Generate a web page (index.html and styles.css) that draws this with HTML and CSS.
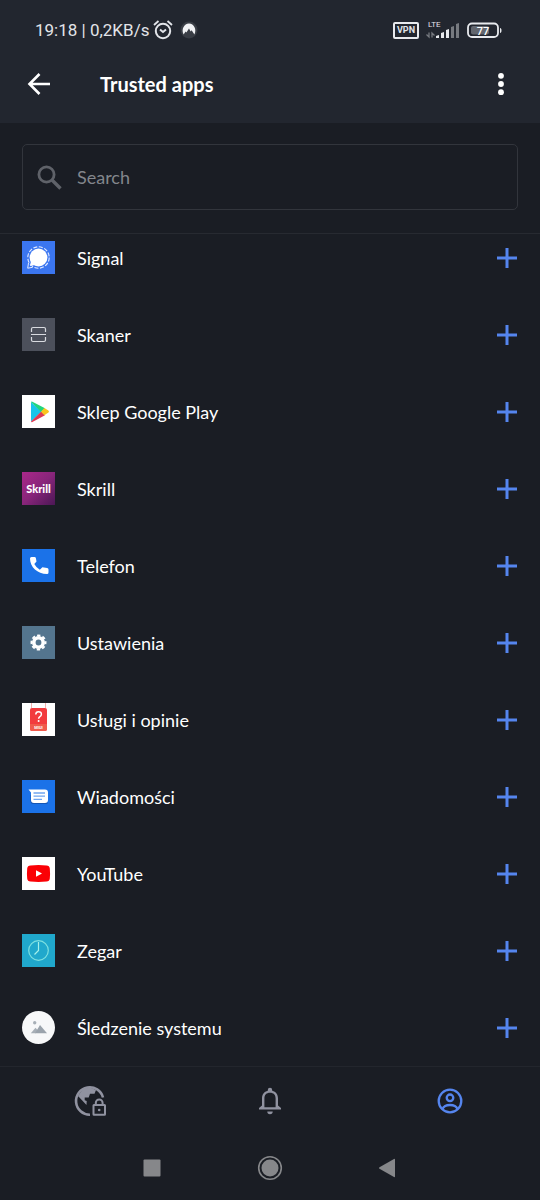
FILE: index.html
```html
<!DOCTYPE html>
<html lang="pl">
<head>
<meta charset="utf-8">
<meta name="viewport" content="width=device-width, initial-scale=1">
<title>Trusted apps</title>
<link rel="stylesheet" href="styles.css">
</head>
<body>
<div class="screen">
  <header class="header">
    <div class="status">
      <div class="status-group">
        <span>19:18 | 0,2KB/s</span>
        <svg class="status-alarm" width="20" height="20" viewBox="0 0 20 20" fill="none" stroke="#e2e4e9" stroke-width="2"><circle cx="10" cy="11" r="7.2"/><path d="M1 5l4.500-4M19 5l-4.500-4" stroke-width="1.800"/><path d="M7 9.500l3 2.500 3-2.500"/></svg>
        <svg width="18" height="18" viewBox="0 0 18 18"><circle cx="9" cy="9" r="8.500" fill="#393d45"/><path d="M3.600 13.500C1 8.500 4 2.500 9 2.500s8 6 5.400 11l-2.800-4.300-1 1.300L9 7.600l-2.600 4-.8-1z" fill="#f1f2f5"/></svg>
      </div>
      <div class="status-group status-right">
        <span class="vpn">VPN</span>
        <svg class="signal" width="34" height="20" viewBox="0 0 34 20"><text x="2" y="7" class="lte">LTE</text><g fill="#e8eaee"><path d="M10 16l3-1v3h-3zM15 13l3-1v6h-3zM20 10l3-1v9h-3z"/></g><path d="M25 7l3-1v12h-3zM30 4l3-1v15h-3z" fill="#777a80"/><path d="M3 12.500V17l-2.500-2.500M6 17.500V13l2.500 2.500" fill="none" stroke="#777a80" stroke-width="1.300"/></svg>
        <svg width="36" height="17" viewBox="0 0 36 17"><rect x="1" y="1.500" width="30" height="13.500" rx="4" fill="none" stroke="#e8eaee" stroke-width="1.800"/><rect x="4" y="4" width="18" height="8.500" rx="2" fill="#62666e"/><path d="M33 6c2 0 2 5 0 5z" fill="#e8eaee"/><text x="16" y="12.500" class="battery">77</text></svg>
      </div>
    </div>
    <div class="toolbar">
      <button class="icon-button" aria-label="Back"><svg width="24" height="24" viewBox="0 0 24 24" fill="none" stroke="#fff" stroke-width="2.600"><path d="M23 12H3M12.500 2L2.500 12l10 10"/></svg></button>
      <h1>Trusted apps</h1>
      <button class="icon-button" aria-label="More options"><svg width="24" height="24" viewBox="0 0 24 24" fill="#fff"><circle cx="12" cy="3.800" r="2.900"/><circle cx="12" cy="12" r="2.900"/><circle cx="12" cy="20.200" r="2.900"/></svg></button>
    </div>
  </header>

  <div class="search">
    <label class="search-box">
      <svg width="25" height="25" viewBox="0 0 25 25" fill="none" stroke="#5f6269" stroke-width="2.800"><circle cx="9.500" cy="9.500" r="7.600"/><path d="M15 15l8.500 8.500" stroke-width="3.400"/></svg>
      <input type="search" placeholder="Search" aria-label="Search">
    </label>
  </div>

  <main class="content">
    <ul class="apps">
      <li><svg class="app-icon" viewBox="0 0 33 33"><path fill="#3b76f0" d="M0 0h33v33H0z"/><circle cx="16.500" cy="16.500" r="8.900" fill="#fff"/><path d="M9 20l-1 5 5-1z" fill="#fff"/><circle cx="16.500" cy="16.500" r="10.700" fill="none" stroke="#e3ebff" stroke-width="1.100" stroke-dasharray="4 1.600"/><path d="M6.500 22l-.8 5.200 5-.9" fill="none" stroke="#e3ebff"/></svg><span>Signal</span><button class="add" aria-label="Add Signal"><svg viewBox="0 0 22 22"><path d="M11 1v20M1 11h20"/></svg></button></li>
      <li><svg class="app-icon" viewBox="0 0 33 33"><path fill="#4c505b" d="M0 0h33v33H0z"/><path d="M9.500 14v-3q0-1.500 1.500-1.500h11q1.500 0 1.500 1.500v3M9.500 19v3q0 1.500 1.500 1.500h11q1.500 0 1.500-1.500v-3M9 16.500h15" fill="none" stroke="#d9dbe0" stroke-width="1.200"/></svg><span>Skaner</span><button class="add" aria-label="Add Skaner"><svg viewBox="0 0 22 22"><path d="M11 1v20M1 11h20"/></svg></button></li>
      <li><svg class="app-icon" viewBox="0 0 33 33"><path fill="#fff" d="M0 0h33v33H0z"/><path d="M9 7v19.500l10.500-10z" fill="#18c4ea"/><path d="M9 7q.4-.7 1.400-.2L23 13.300l-3.800 3.600z" fill="#22d67d"/><path d="M9 26.500q.4 1 1.400.4L23 20.200l-3.800-3.600z" fill="#dc3a54"/><path d="M22.400 13l4 2.500q1.200 1 0 2l-4 2.700-3.400-3.500z" fill="#f9c51c"/></svg><span>Sklep Google Play</span><button class="add" aria-label="Add Sklep Google Play"><svg viewBox="0 0 22 22"><path d="M11 1v20M1 11h20"/></svg></button></li>
      <li><svg class="app-icon" viewBox="0 0 33 33"><defs><linearGradient id="skrill" x1="0" y1="0" x2="1" y2="1"><stop offset="0" stop-color="#aa2889"/><stop offset=".5" stop-color="#88257a"/><stop offset="1" stop-color="#4b1755"/></linearGradient></defs><path fill="url(#skrill)" d="M0 0h33v33H0z"/><text x="16.500" y="20.500" class="skrill">Skrill</text></svg><span>Skrill</span><button class="add" aria-label="Add Skrill"><svg viewBox="0 0 22 22"><path d="M11 1v20M1 11h20"/></svg></button></li>
      <li><svg class="app-icon" viewBox="0 0 33 33"><path fill="#1b72e8" d="M0 0h33v33H0z"/><path d="M8 9.500Q8 8 9.500 8h3q1.200 0 1.400 1.200l.6 3.300-2.200 2.600q2.100 4 5.500 5.600l2.600-2.500 4.700.8q1.400.3 1.400 1.500v3q0 1.500-1.500 1.500C15.500 25 8 18 8 9.500z" fill="#fff"/></svg><span>Telefon</span><button class="add" aria-label="Add Telefon"><svg viewBox="0 0 22 22"><path d="M11 1v20M1 11h20"/></svg></button></li>
      <li><svg class="app-icon" viewBox="0 0 33 33"><path fill="#54758e" d="M0 0h33v33H0z"/><circle cx="16.500" cy="16.500" r="4.700" fill="none" stroke="#fff" stroke-width="3.600"/><circle cx="16.500" cy="16.500" r="7" fill="none" stroke="#fff" stroke-width="2" stroke-dasharray="3.300 2.200" stroke-dashoffset="1.650"/></svg><span>Ustawienia</span><button class="add" aria-label="Add Ustawienia"><svg viewBox="0 0 22 22"><path d="M11 1v20M1 11h20"/></svg></button></li>
      <li><svg class="app-icon" viewBox="0 0 33 33"><path fill="#fff" d="M0 0h33v33H0z"/><path d="M9.500 0v5M23.500 0v5" stroke="#f2b3b0"/><rect x="8" y="5" width="17" height="23" rx="2" fill="#f23b3e"/><path d="M8 21h17v5q0 2-2 2H10q-2 0-2-2z" fill="#f05a4c"/><path d="M13.800 11.500q0-2.700 2.800-2.700t2.800 2.500q0 1.500-1.500 2.300-1.300.8-1.300 2.200" fill="none" stroke="#fff" stroke-width="1.500"/><circle cx="16.600" cy="18" r="1" fill="#fff"/><text x="16.500" y="26" class="miui">MIUI</text></svg><span>Usługi i opinie</span><button class="add" aria-label="Add Usługi i opinie"><svg viewBox="0 0 22 22"><path d="M11 1v20M1 11h20"/></svg></button></li>
      <li><svg class="app-icon" viewBox="0 0 33 33"><path fill="#1b72e8" d="M0 0h33v33H0z"/><path d="M8.500 15h17v9H11q-2.500 0-2.500-3z" fill="#1556b5"/><path d="M6.500 9.500H23q3 0 3 3V20q0 3-3 3H12q-3 0-3-3v-7.500z" fill="#fff"/><path d="M11.500 13h11.500M11.500 16.200h11.500M11.500 19.400h8.500" stroke="#70a5ef" stroke-width="1.300"/></svg><span>Wiadomości</span><button class="add" aria-label="Add Wiadomości"><svg viewBox="0 0 22 22"><path d="M11 1v20M1 11h20"/></svg></button></li>
      <li><svg class="app-icon" viewBox="0 0 33 33"><path fill="#fff" d="M0 0h33v33H0z"/><path d="M8.500 8.500q8-.8 16 0 3 .2 3.300 3 .5 5 0 10-.3 2.800-3.300 3-8 .8-16 0-3-.2-3.300-3-.5-5 0-10 .3-2.800 3.300-3z" fill="#fa0005"/><path d="M14 13.200v6.600l6-3.300z" fill="#fff"/></svg><span>YouTube</span><button class="add" aria-label="Add YouTube"><svg viewBox="0 0 22 22"><path d="M11 1v20M1 11h20"/></svg></button></li>
      <li><svg class="app-icon" viewBox="0 0 33 33"><path fill="#20a8cc" d="M0 0h33v33H0z"/><circle cx="16.500" cy="16.500" r="9.800" fill="none" stroke="#7de0e0" stroke-width="1.200"/><path d="M16.500 8v8.500L12.500 20.500" fill="none" stroke="#a5f0ea" stroke-width="1.200"/></svg><span>Zegar</span><button class="add" aria-label="Add Zegar"><svg viewBox="0 0 22 22"><path d="M11 1v20M1 11h20"/></svg></button></li>
      <li><svg class="app-icon" viewBox="0 0 33 33"><circle cx="16.500" cy="16.500" r="16.500" fill="#f7f8f9"/><path d="M8.800 22.200l4.700-5.400 2.300 2.500-2.200 2.900z" fill="#a7afb7"/><path d="M13 22.200L18 14l7 8.200z" fill="#9aa3ac"/><circle cx="12.700" cy="11.700" r="1.700" fill="#a7afb7"/></svg><span>Śledzenie systemu</span><button class="add" aria-label="Add Śledzenie systemu"><svg viewBox="0 0 22 22"><path d="M11 1v20M1 11h20"/></svg></button></li>
    </ul>
  </main>

  <nav class="tabs" aria-label="Main">
    <button aria-label="VPN"><svg width="32" height="32" viewBox="0 0 32 32" fill="none" stroke="#9092a0" stroke-width="2.600"><path d="M16 29.700A13.700 13.700 0 1 1 29 12.500"/><path d="M4 11l8.500 9 .2-4-2-.7V12.500h4L16 8.700h4.500L22 5 16 2.500 9 4z" fill="#9092a0" stroke="none"/><rect x="19.500" y="20" width="11.500" height="9.800" rx=".5" stroke-width="2"/><path d="M21.800 20v-2.200a3.400 3.400 0 0 1 6.800 0V20" stroke-width="2"/><circle cx="25.200" cy="25" r="1.300" fill="#9092a0" stroke="none"/></svg></button>
    <button aria-label="Notifications"><svg width="24" height="28" viewBox="0 0 24 28" fill="#9092a0"><path d="M1 22.500V21l3-2.500v-7c0-4 2-6.800 5.800-7.800V3a2.200 2.200 0 0 1 4.400 0v.7C18 4.700 20 7.500 20 11.500v7l3 2.500v1.500zM6.400 20.200h11.200v-8.700c0-3.600-2-5.700-5.600-5.700s-5.600 2.100-5.600 5.700z" fill-rule="evenodd"/><path d="M9.300 24.500h5.400a2.700 2.700 0 0 1-5.400 0z"/></svg></button>
    <button aria-label="Profile" aria-current="page"><svg width="26" height="26" viewBox="0 0 26 26" fill="none" stroke="#5585ee" stroke-width="2.300"><circle cx="13" cy="13" r="11.300"/><circle cx="13" cy="9.800" r="3.300"/><path d="M5.500 21c1-2.500 4-4 7.500-4s6.500 1.500 7.500 4"/></svg></button>
  </nav>

  <div class="system-nav">
    <button aria-label="Recent apps"><svg width="26" height="26" viewBox="0 0 26 26"><rect x="4.500" y="4.500" width="17" height="17" rx="1" fill="#86878a"/></svg></button>
    <button aria-label="Home"><svg width="26" height="26" viewBox="0 0 26 26"><circle cx="13" cy="13" r="11.300" fill="none" stroke="#86878a" stroke-width="1.600"/><circle cx="13" cy="13" r="8.500" fill="#86878a"/></svg></button>
    <button aria-label="System back"><svg width="26" height="26" viewBox="0 0 26 26"><path d="M4.500 12.200L19 4q1-.5 1 .6v16.800q0 1.100-1 .6L4.500 13.800q-1.200-.8 0-1.600z" fill="#86878a"/></svg></button>
  </div>
</div>
</body>
</html>
```
FILE: styles.css
```css
* { box-sizing: border-box; }

body {
  margin: 0;
  background: #1a1d24;
  color: #fff;
  font-family: Lato, "Liberation Sans", sans-serif;
}

button {
  display: grid;
  place-items: center;
  padding: 0;
  border: 0;
  background: none;
  cursor: pointer;
}

.screen {
  display: flex;
  flex-direction: column;
  min-height: 100vh;
}

.header {
  padding-bottom: 15px;
  background: #22262f;
}

.status {
  display: flex;
  justify-content: space-between;
  align-items: center;
  height: 60px;
  padding: 0 37px 0 35px;
  color: #e2e4e9;
  font: 400 17px Roboto, sans-serif;
}

.status-group {
  display: flex;
  align-items: center;
  gap: 7px;
}

.status-alarm { margin-left: -3px; }

.vpn {
  padding: 0 2px;
  border: 2px solid #e8eaee;
  border-radius: 2px;
  font: 700 9px/13px Roboto, sans-serif;
}

.lte {
  fill: #e2e4e9;
  font: 400 8px Roboto, sans-serif;
}

.battery {
  fill: #fff;
  font: 500 11px Roboto, sans-serif;
  text-anchor: middle;
}

.toolbar {
  display: flex;
  align-items: center;
  height: 48px;
  padding: 0 15px;
}

.icon-button {
  width: 48px;
  height: 48px;
}

.toolbar h1 {
  flex: 1;
  margin: 0;
  padding-left: 37px;
  font-size: 20px;
  font-weight: 700;
}

.search {
  padding: 21px 22px 23px;
  border-bottom: 1px solid #272a31;
}

.search-box {
  display: flex;
  align-items: center;
  gap: 15px;
  height: 66px;
  padding: 0 14px;
  border: 1px solid #32353c;
  border-radius: 5px;
}

.search-box input {
  flex: 1;
  min-width: 0;
  padding: 0;
  border: 0;
  outline: 0;
  background: none;
  color: #fff;
  font: 18px Lato, sans-serif;
}

.search-box input::placeholder {
  color: #83868c;
  opacity: 1;
}

.content {
  flex: 1;
  padding: 7px 22px 22px;
}

.apps {
  display: grid;
  gap: 44px;
  margin: 0;
  padding: 0;
  list-style: none;
}

.apps li {
  display: flex;
  align-items: center;
  gap: 22px;
  height: 33px;
  font-size: 18px;
}

.apps span { flex: 1; }

.app-icon {
  width: 33px;
  height: 33px;
}

.skrill {
  fill: #fff;
  font: 900 11px Lato, sans-serif;
  text-anchor: middle;
}

.miui {
  fill: #fff;
  font: 700 4px Roboto, sans-serif;
  text-anchor: middle;
}

.add svg {
  width: 22px;
  height: 22px;
  fill: none;
  stroke: #5585ee;
  stroke-width: 3;
}

.tabs {
  display: grid;
  grid-template-columns: repeat(3, 1fr);
  height: 69px;
  border-top: 1px solid #23262d;
}

.system-nav {
  display: grid;
  grid-template-columns: repeat(3, 118px);
  justify-content: center;
  height: 65px;
}
```
